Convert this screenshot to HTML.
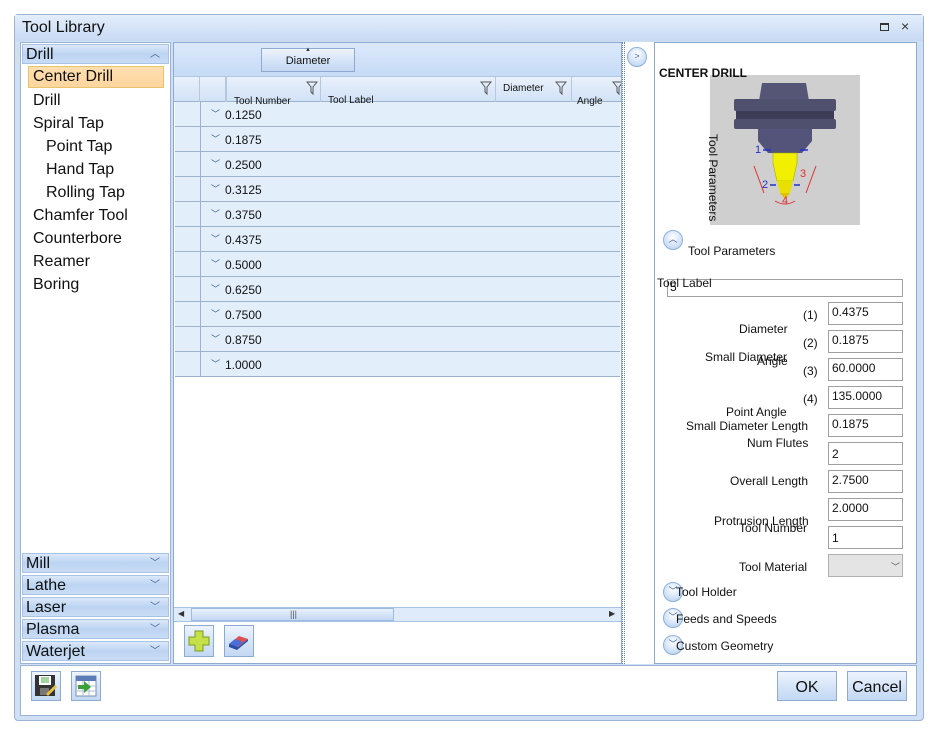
<!DOCTYPE html>
<html><head><meta charset="utf-8"><style>
*{margin:0;padding:0;box-sizing:border-box}
body{width:941px;height:738px;background:#fff;font-family:"Liberation Sans",sans-serif;position:relative;overflow:hidden;color:#111}
.a{position:absolute}
.hdr{position:absolute;left:22px;width:147px;height:20px;background:linear-gradient(#dbe8f9,#bcd4f2 50%,#c9dcf5);border:1px solid #a9c3e6;font-size:16px;padding-left:3px;line-height:19px}
.hdr .c{position:absolute;right:8px;top:0;font-size:10px;color:#3d5f94}
.it{position:absolute;font-size:16px;left:33px}
.row{position:absolute;left:175px;width:445px;height:25px;background:#e3eefb;border-bottom:1px solid #9db3cc}
.row .s{position:absolute;left:25px;top:0;width:1px;height:24px;background:#9db3cc}
.row .t{position:absolute;left:50px;top:6px;font-size:12px}
.row .v{position:absolute;left:36px;top:5px;font-size:9px;color:#3b5b8e}
.lbl{position:absolute;font-size:12px;text-align:right}
.inp{position:absolute;left:828px;width:75px;height:23px;border:1px solid #a0a0a0;background:#fff;font-size:12px;padding:2px 0 0 3px}
.circ{position:absolute;width:20px;height:20px;border-radius:50%;border:1px solid #8fb0db;background:radial-gradient(circle at 50% 35%,#fff,#c9dcf5 70%,#a9c6ec);font-size:9px;color:#3d5f94;text-align:center;line-height:17px}
.btn{position:absolute;border:1px solid #8fa9cf;background:linear-gradient(#eef4fc,#d6e5f8 50%,#c3d8f3);font-size:16px;text-align:center}
.fun{position:absolute;top:81px}
</style></head><body>
<div class="a" style="left:14px;top:14px;width:910px;height:707px;border:1px solid #9ab3d6;border-radius:4px;background:#cfdff4"></div>
<div class="a" style="left:15px;top:15px;width:908px;height:26px;background:linear-gradient(#e4eefb,#c7daf3)"></div>
<div class="a" style="left:22px;top:19px;font-size:16px">Tool Library</div>
<div class="a" style="left:880px;top:23px;width:9px;height:8px;border:1px solid #333;border-top-width:2px"></div>
<div class="a" style="left:901px;top:18px;font-size:14px;color:#333">×</div>
<div class="a" style="left:20px;top:42px;width:151px;height:622px;background:#fff;border:1px solid #9ab3d6"></div>
<div class="hdr" style="top:44px">Drill<span class="c">︿</span></div>
<div class="a" style="left:28px;top:66px;width:136px;height:22px;background:linear-gradient(#ffe0b0,#fdd59e);border:1px solid #e8c36e"></div>
<div class="it" style="top:68px">Center Drill</div>
<div class="it" style="top:92px">Drill</div>
<div class="it" style="top:115px">Spiral Tap</div>
<div class="it" style="top:138px;left:46px">Point Tap</div>
<div class="it" style="top:161px;left:46px">Hand Tap</div>
<div class="it" style="top:184px;left:46px">Rolling Tap</div>
<div class="it" style="top:207px">Chamfer Tool</div>
<div class="it" style="top:230px">Counterbore</div>
<div class="it" style="top:253px">Reamer</div>
<div class="it" style="top:276px">Boring</div>
<div class="hdr" style="top:553px">Mill<span class="c">﹀</span></div>
<div class="hdr" style="top:575px">Lathe<span class="c">﹀</span></div>
<div class="hdr" style="top:597px">Laser<span class="c">﹀</span></div>
<div class="hdr" style="top:619px">Plasma<span class="c">﹀</span></div>
<div class="hdr" style="top:641px">Waterjet<span class="c">﹀</span></div>
<div class="a" style="left:173px;top:42px;width:449px;height:622px;background:#fff;border:1px solid #8fa9cf"></div>
<div class="a" style="left:174px;top:43px;width:447px;height:33px;background:linear-gradient(#dce9fb,#c6dbf6)"></div>
<div class="btn" style="left:261px;top:48px;width:94px;height:24px;font-size:11px;line-height:25px">Diameter</div>
<div class="a" style="left:305px;top:47px;font-size:6px;color:#333">▲</div>
<div class="a" style="left:174px;top:76px;width:447px;height:26px;background:linear-gradient(#e9f1fc,#d2e2f6);border-top:1px solid #b0c6e2;border-bottom:1px solid #9db3cc"></div>
<div class="a" style="left:199px;top:77px;width:1px;height:25px;background:#b5c8e0"></div>
<div class="a" style="left:225px;top:77px;width:2px;height:25px;background:#b5c8e0"></div>
<div class="a" style="left:320px;top:77px;width:1px;height:25px;background:#b5c8e0"></div>
<div class="a" style="left:495px;top:77px;width:1px;height:25px;background:#b5c8e0"></div>
<div class="a" style="left:571px;top:77px;width:1px;height:25px;background:#b5c8e0"></div>
<div class="row" style="top:102px"><div class="s"></div><span class="v">﹀</span><span class="t">0.1250</span></div>
<div class="row" style="top:127px"><div class="s"></div><span class="v">﹀</span><span class="t">0.1875</span></div>
<div class="row" style="top:152px"><div class="s"></div><span class="v">﹀</span><span class="t">0.2500</span></div>
<div class="row" style="top:177px"><div class="s"></div><span class="v">﹀</span><span class="t">0.3125</span></div>
<div class="row" style="top:202px"><div class="s"></div><span class="v">﹀</span><span class="t">0.3750</span></div>
<div class="row" style="top:227px"><div class="s"></div><span class="v">﹀</span><span class="t">0.4375</span></div>
<div class="row" style="top:252px"><div class="s"></div><span class="v">﹀</span><span class="t">0.5000</span></div>
<div class="row" style="top:277px"><div class="s"></div><span class="v">﹀</span><span class="t">0.6250</span></div>
<div class="row" style="top:302px"><div class="s"></div><span class="v">﹀</span><span class="t">0.7500</span></div>
<div class="row" style="top:327px"><div class="s"></div><span class="v">﹀</span><span class="t">0.8750</span></div>
<div class="row" style="top:352px"><div class="s"></div><span class="v">﹀</span><span class="t">1.0000</span></div>
<div class="a" style="left:234px;top:96px;font-size:10px">Tool Number</div>
<div class="a" style="left:328px;top:95px;font-size:10px">Tool Label</div>
<div class="a" style="left:503px;top:83px;font-size:10px">Diameter</div>
<div class="a" style="left:577px;top:96px;font-size:10px">Angle</div>
<svg class="fun" style="left:306px" width="12" height="14"><path d="M1 1h10L7 6v7L5 11V6z" fill="none" stroke="#555"/></svg>
<svg class="fun" style="left:480px" width="12" height="14"><path d="M1 1h10L7 6v7L5 11V6z" fill="none" stroke="#555"/></svg>
<svg class="fun" style="left:555px" width="12" height="14"><path d="M1 1h10L7 6v7L5 11V6z" fill="none" stroke="#555"/></svg>
<svg class="fun" style="left:612px" width="9" height="14"><path d="M1 1h10L7 6v7L5 11V6z" fill="none" stroke="#555"/></svg>
<div class="a" style="left:174px;top:607px;width:447px;height:15px;background:#dfeafa;border-top:1px solid #a9c3e6;border-bottom:1px solid #a9c3e6"></div>
<div class="a" style="left:191px;top:608px;width:203px;height:13px;background:linear-gradient(#e8f1fc,#c3d8f4);border:1px solid #9fbbe0"></div>
<div class="a" style="left:178px;top:609px;font-size:8px;color:#333">◀</div>
<div class="a" style="left:609px;top:609px;font-size:8px;color:#333">▶</div>
<div class="a" style="left:290px;top:609px;font-size:9px;color:#555">|||</div>
<div class="btn" style="left:184px;top:625px;width:30px;height:32px"></div>
<svg class="a" style="left:186px;top:628px" width="26" height="26"><path d="M9 3h8v6h6v8h-6v6H9v-6H3V9h6z" fill="#c6e04a" stroke="#7a9a1e" stroke-width="1"/></svg>
<div class="btn" style="left:224px;top:625px;width:30px;height:32px"></div>
<svg class="a" style="left:226px;top:628px" width="26" height="26"><path d="M3 16l10-8 9 3-10 8z" fill="#e05050"/><path d="M3 16l6-5 8 3-6 5z" fill="#4a70d8"/><path d="M3 16v3l8 3 11-9v-2l-10 8z" fill="#2c4ea8"/></svg>
<div class="a" style="left:622px;top:42px;width:33px;height:622px;background:#fff"></div>
<div class="a" style="left:622px;top:42px;width:3px;height:622px;border-left:1px dotted #6a86b0;border-right:1px dotted #6a86b0"></div>
<div class="circ" style="left:627px;top:47px">&gt;</div>
<div class="a" style="left:654px;top:42px;width:263px;height:622px;background:#fff;border:1px solid #8fa9cf"></div>
<div class="a" style="left:710px;top:75px;width:150px;height:150px;background:#cfcfcf"></div>
<svg class="a" style="left:710px;top:75px" width="150" height="150">
<path d="M52 8h44l4 24H48z" fill="#555575"/><rect x="24" y="24" width="102" height="12" rx="2" fill="#4f4f6e"/><rect x="26" y="36" width="98" height="8" fill="#3d3d58"/><rect x="24" y="44" width="102" height="10" rx="2" fill="#4f4f6e"/><path d="M48 54h54v12l-10 12H58L48 66z" fill="#54547a"/>
<path d="M63 78h24v10l-4 18H67l-4-18z" fill="#f0f000" stroke="#a0a000" stroke-width=".5"/><path d="M67 106h16l-3 12h-10z" fill="#e8e000"/><path d="M70 118h10l-5 6z" fill="#e0c000"/>
<path d="M44 91l10 27M106 91l-10 27M65 126q10 6 20 0" stroke="#e03030" fill="none"/>
<text x="45" y="78" fill="#2030d0" font-size="11" font-family="Liberation Sans">1</text><text x="52" y="113" fill="#2030d0" font-size="11" font-family="Liberation Sans">2</text><text x="90" y="102" fill="#e03030" font-size="11" font-family="Liberation Sans">3</text><text x="72" y="129" fill="#e03030" font-size="11" font-family="Liberation Sans">4</text>
<path d="M53 75h8M90 75h8M60 110h6M84 110h6" stroke="#2030d0" stroke-width="1.5"/>
</svg>
<div class="a" style="left:659px;top:66px;font-size:12px;font-weight:bold">CENTER DRILL</div>
<div class="a" style="top:134px;font-size:12px;transform:rotate(90deg);transform-origin:0 0;white-space:nowrap;left:720px">Tool Parameters</div>
<div class="circ" style="left:663px;top:230px">︿</div>
<div class="a" style="left:688px;top:244px;font-size:12px">Tool Parameters</div>
<div class="a" style="left:667px;top:279px;width:236px;height:18px;border:1px solid #a0a0a0;font-size:12px;padding-left:2px">5</div>
<div class="a" style="left:657px;top:276px;font-size:12px">Tool Label</div>
<div class="lbl" style="left:803px;top:308px">(1)</div>
<div class="lbl" style="left:803px;top:336px">(2)</div>
<div class="lbl" style="left:803px;top:364px">(3)</div>
<div class="lbl" style="left:803px;top:392px">(4)</div>
<div class="inp" style="top:302px">0.4375</div>
<div class="inp" style="top:330px">0.1875</div>
<div class="inp" style="top:358px">60.0000</div>
<div class="inp" style="top:386px">135.0000</div>
<div class="inp" style="top:414px">0.1875</div>
<div class="inp" style="top:442px;padding-top:4px">2</div>
<div class="inp" style="top:470px">2.7500</div>
<div class="inp" style="top:498px">2.0000</div>
<div class="inp" style="top:526px;padding-top:4px">1</div>
<div class="a" style="left:828px;top:554px;width:75px;height:23px;border:1px solid #b0b0b0;background:#e4e4e4;font-size:9px;color:#555;padding:5px 0 0 62px">﹀</div>
<div class="lbl" style="left:739px;top:322px">Diameter</div>
<div class="lbl" style="left:705px;top:350px">Small Diameter</div>
<div class="lbl" style="left:757px;top:354px">Angle</div>
<div class="lbl" style="left:726px;top:405px">Point Angle</div>
<div class="lbl" style="left:686px;top:419px">Small Diameter Length</div>
<div class="lbl" style="left:747px;top:436px">Num Flutes</div>
<div class="lbl" style="left:730px;top:474px">Overall Length</div>
<div class="lbl" style="left:714px;top:514px">Protrusion Length</div>
<div class="lbl" style="left:739px;top:521px">Tool Number</div>
<div class="lbl" style="left:739px;top:560px">Tool Material</div>
<div class="circ" style="left:663px;top:582px">﹀</div>
<div class="a" style="left:676px;top:585px;font-size:12px">Tool Holder</div>
<div class="circ" style="left:663px;top:608px">﹀</div>
<div class="a" style="left:676px;top:612px;font-size:12px">Feeds and Speeds</div>
<div class="circ" style="left:663px;top:635px">﹀</div>
<div class="a" style="left:676px;top:639px;font-size:12px">Custom Geometry</div>
<div class="a" style="left:20px;top:665px;width:897px;height:51px;background:#fff;border:1px solid #9ab3d6"></div>
<div class="btn" style="left:31px;top:671px;width:30px;height:30px"></div>
<svg class="a" style="left:34px;top:674px" width="24" height="24"><rect x="1" y="1" width="20" height="21" fill="#333"/><rect x="5" y="2" width="12" height="9" fill="#fff"/><path d="M7 4h8M7 6h8M7 8h8" stroke="#4a4"/><rect x="6" y="14" width="9" height="7" fill="#777"/><path d="M12 20l9-9 2 2-9 9z" fill="#e8c040"/></svg>
<div class="btn" style="left:71px;top:671px;width:30px;height:30px"></div>
<svg class="a" style="left:74px;top:674px" width="24" height="24"><rect x="2" y="2" width="20" height="20" fill="#fff" stroke="#7a8fb0"/><rect x="2" y="2" width="20" height="5" fill="#5a7ab8"/><path d="M2 12h20M2 17h20M9 7v15M15 7v15" stroke="#b0bccf"/><path d="M4 11h6V7l7 6-7 6v-4H4z" fill="#3aa03a"/></svg>
<div class="btn" style="left:777px;top:671px;width:60px;height:30px;line-height:31px">OK</div>
<div class="btn" style="left:847px;top:671px;width:60px;height:30px;line-height:31px">Cancel</div>
</body></html>
